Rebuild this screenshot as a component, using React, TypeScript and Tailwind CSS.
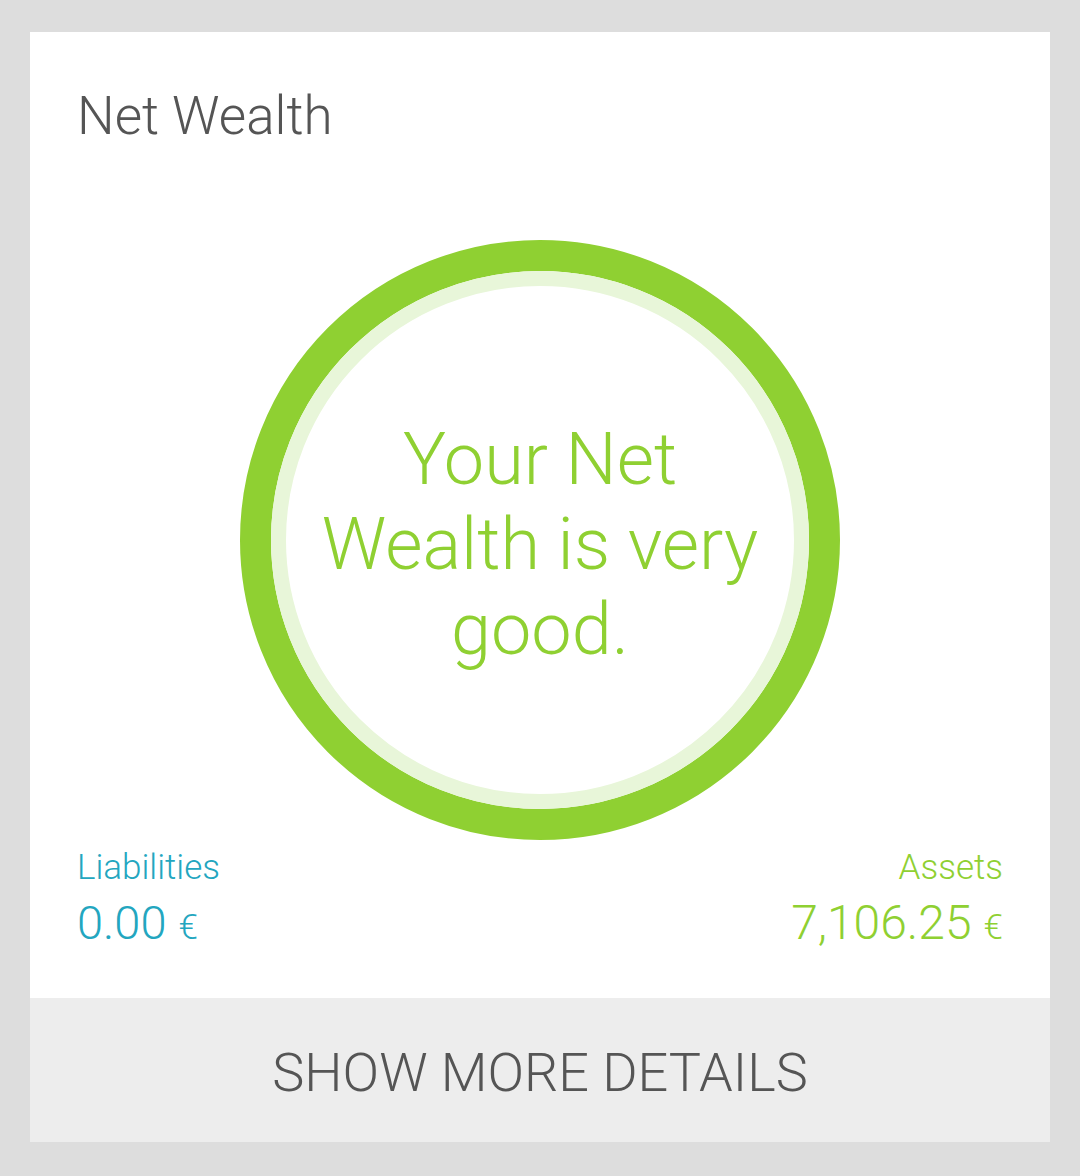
import React from "react";

function WealthRing() {
  return (
    <div className="relative w-[600px] h-[600px]">
      <svg width="600" height="600" viewBox="0 0 600 600" className="absolute inset-0">
        <circle cx="300" cy="300" r="284.5" fill="none" stroke="#8fd032" strokeWidth="31" />
        <circle cx="300" cy="300" r="261.5" fill="none" stroke="#e8f6d9" strokeWidth="15" />
      </svg>
      <div className="relative h-full flex items-center justify-center pt-[9px]">
        <p className="w-[460px] text-center text-[72px] leading-[85px] font-light text-[#8fd032]">
          Your Net Wealth is very good.
        </p>
      </div>
    </div>
  );
}

export default function App() {
  return (
    <div
      className="min-h-[1176px] bg-[#dddddd] px-[30px] pt-[32px] pb-[34px]"
      style={{ fontFamily: "Roboto, 'Liberation Sans', sans-serif" }}
    >
      <div className="bg-white">
        <div className="px-[47px] pt-[52px] pb-[34px]">
          <h1 className="text-[53px] leading-[64px] font-light text-[#555555]">Net Wealth</h1>

          <div className="mt-[92px] flex justify-center">
            <WealthRing />
          </div>

          <div className="flex justify-between items-end mt-[6px]">
            <div className="text-[#23a6bf]">
              <div className="text-[35px] leading-[44px] font-light">Liabilities</div>
              <div className="font-light leading-[60px] mt-[3px]">
                <span className="text-[47px]">0.00</span>
                <span className="text-[35px] ml-[12px]">€</span>
              </div>
            </div>
            <div className="text-right text-[#8fd032]">
              <div className="text-[35px] leading-[44px] font-light">Assets</div>
              <div className="font-light leading-[60px] mt-[3px]">
                <span className="text-[48px]">7,106.25</span>
                <span className="text-[35px] ml-[12px]">€</span>
              </div>
            </div>
          </div>
        </div>

        <button className="w-full h-[144px] bg-[#ededed] flex items-center justify-center pt-[4px] text-[54px] font-light text-[#555555]">
          SHOW MORE DETAILS
        </button>
      </div>
    </div>
  );
}
